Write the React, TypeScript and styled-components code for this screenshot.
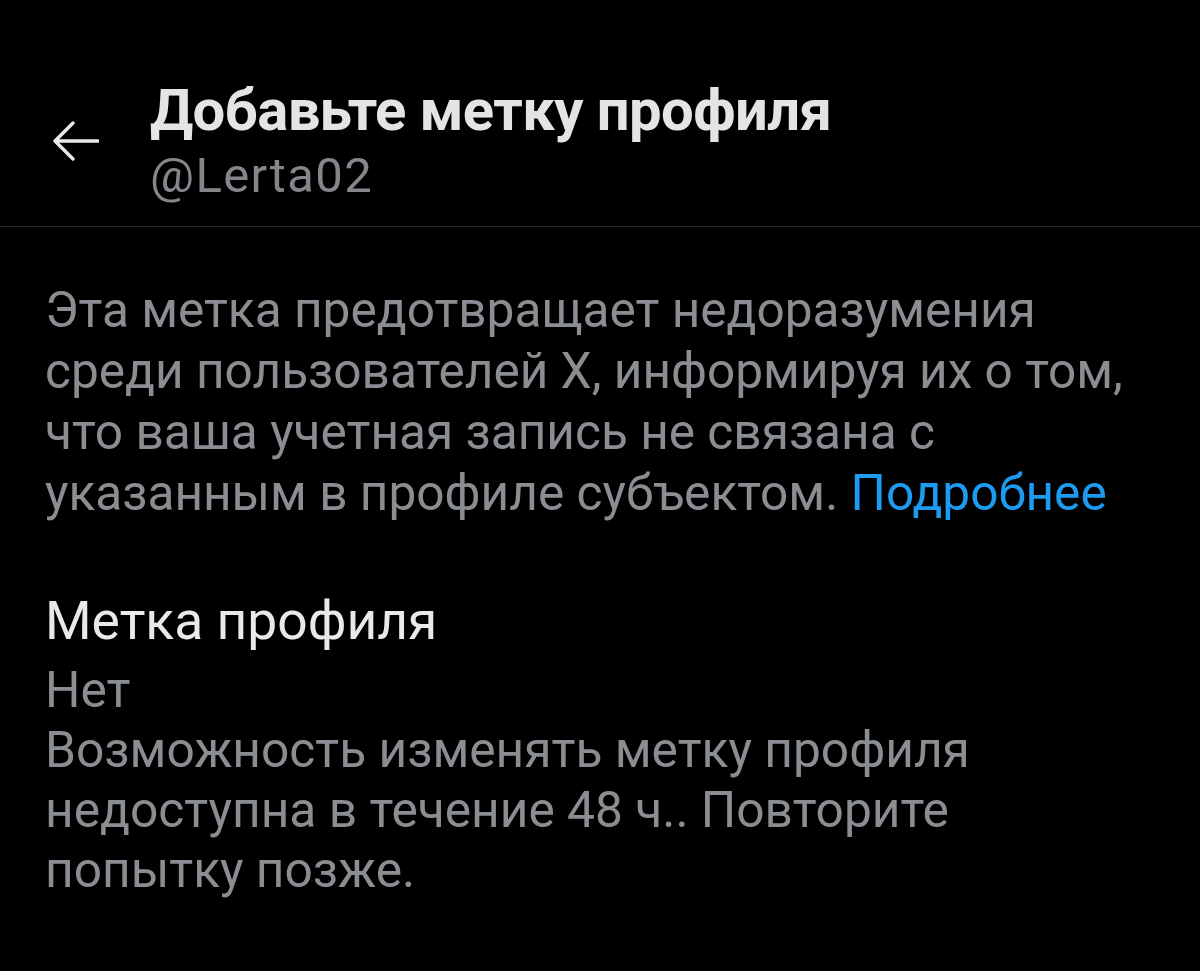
import React from "react";
import styled, { createGlobalStyle } from "styled-components";

const Global = createGlobalStyle`
  html, body { margin: 0; padding: 0; background: #000; }
  body { font-family: Roboto, "Noto Sans", sans-serif; }
`;

const Page = styled.div`
  width: 1200px;
  height: 971px;
  background: #000;
  overflow: hidden;
`;

const Header = styled.header`
  display: flex;
  align-items: center;
  padding: 80px 0 25px 53px;
  border-bottom: 1px solid #242629;
`;

const BackButton = styled.div`
  width: 46px;
  height: 40px;
  margin-right: 51px;
  color: #e7e9ea;
  display: flex;
  align-items: center;
`;

const TitleBlock = styled.div`
  display: flex;
  flex-direction: column;
  gap: 11px;
`;

const Title = styled.h1`
  margin: 0;
  font-family: Roboto, sans-serif;
  font-weight: 700;
  font-size: 58px;
  line-height: 60px;
  letter-spacing: -0.6px;
  color: #e2e4e5;
  white-space: nowrap;
`;

const Handle = styled.div`
  font-family: Roboto, sans-serif;
  font-weight: 400;
  font-size: 49px;
  line-height: 50px;
  letter-spacing: 1.4px;
  color: #83878c;
`;

const Content = styled.main`
  padding: 53px 60px 0 45px;
`;

const Paragraph = styled.p`
  margin: 0;
  font-size: 49.6px;
  line-height: 61px;
  color: #8a8e93;
`;

const Link = styled.a`
  color: #1d9bf0;
  text-decoration: none;
`;

const Section = styled.section`
  margin-top: 67px;
  display: flex;
  flex-direction: column;
  gap: 9px;
`;

const Label = styled.div`
  font-size: 53.4px;
  line-height: 60px;
  color: #e7e9ea;
`;

const Muted = styled.div`
  font-size: 49.7px;
  line-height: 60px;
  color: #8a8e93;
`;

const ArrowIcon = () => (
  <svg width="46" height="40" viewBox="0 0 46 40" fill="none">
    <path d="M45 20H3M20 2L2 20L20 38" stroke="currentColor" strokeWidth="3.4" strokeLinecap="round" strokeLinejoin="round" />
  </svg>
);

export default function App() {
  return (
    <Page>
      <Global />
      <Header>
        <BackButton>
          <ArrowIcon />
        </BackButton>
        <TitleBlock>
          <Title>Добавьте метку профиля</Title>
          <Handle>@Lerta02</Handle>
        </TitleBlock>
      </Header>
      <Content>
        <Paragraph>
          Эта метка предотвращает недоразумения среди пользователей Х, информируя их о том, что ваша учетная запись не связана с указанным в профиле субъектом. <Link href="#">Подробнее</Link>
        </Paragraph>
        <Section>
          <Label>Метка профиля</Label>
          <Muted>
            Нет
            <br />
            Возможность изменять метку профиля недоступна в течение 48 ч.. Повторите попытку позже.
          </Muted>
        </Section>
      </Content>
    </Page>
  );
}
